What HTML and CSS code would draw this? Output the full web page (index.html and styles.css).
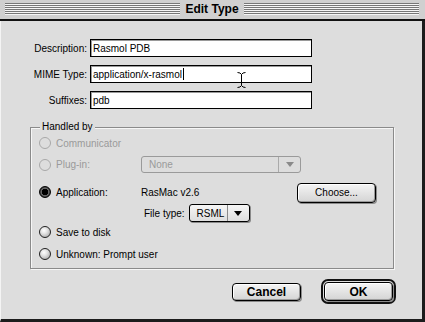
FILE: index.html
```html
<!DOCTYPE html>
<html lang="en">
	<head>
		<meta charset="UTF-8" />
		<title>Edit Type</title>
		<link rel="stylesheet" href="styles.css">
	</head>
	<body>
		<div class="window">
			<div class="titlebar">
				<span class="stripes"></span>
				<span class="title">Edit Type</span>
				<span class="stripes"></span>
			</div>

			<div class="content">
				<div class="fields">
					<div class="field">
						<span class="field-label">Description:</span>
						<div class="input">Rasmol PDB</div>
					</div>
					<div class="field">
						<span class="field-label">MIME Type:</span>
						<div class="input">application/x-rasmol<span class="caret"></span>
							<svg class="ibeam" width="9" height="16" viewBox="0 0 9 16">
								<path d="M0.5 0.5 Q3.5 0.5 4.5 2.5 Q5.5 0.5 8.5 0.5 M4.5 2.5 V13.5 M0.5 15.5 Q3.5 15.5 4.5 13.5 Q5.5 15.5 8.5 15.5" fill="none" stroke="#000" stroke-width="1" />
							</svg>
						</div>
					</div>
					<div class="field">
						<span class="field-label">Suffixes:</span>
						<div class="input">pdb</div>
					</div>
				</div>

				<div class="group">
					<span class="legend">Handled by</span>

					<div class="row row-comm">
						<span class="opt is-disabled"><span class="radio radio-off-disabled"></span>Communicator</span>
					</div>

					<div class="row row-plugin">
						<span class="opt is-disabled"><span class="radio radio-off-disabled"></span>Plug-in:</span>
						<div class="popup popup-disabled popup-plugin">
							<span class="popup-value">None</span>
							<span class="popup-arrow"><span class="tri"></span></span>
						</div>
					</div>

					<div class="row row-app">
						<span class="opt"><span class="radio radio-on"></span>Application:</span>
						<span class="app-name">RasMac v2.6</span>
						<span class="btn btn-choose">Choose...</span>
					</div>

					<div class="row row-filetype">
						<span class="opt"></span>
						<span class="filetype-label">File type:</span>
						<div class="popup popup-filetype">
							<span class="popup-value">RSML</span>
							<span class="popup-arrow"><span class="tri"></span></span>
						</div>
					</div>

					<div class="row row-save">
						<span class="opt opt-wide"><span class="radio radio-off"></span>Save to disk</span>
					</div>

					<div class="row row-unknown">
						<span class="opt opt-wide"><span class="radio radio-off"></span>Unknown: Prompt user</span>
					</div>
				</div>

				<div class="actions">
					<span class="btn btn-cancel">Cancel</span>
					<span class="ok-ring"><span class="btn btn-ok">OK</span></span>
				</div>
			</div>
		</div>
	</body>
</html>
```

FILE: styles.css
```css
body {
	margin: 0;
	font-family: "Liberation Sans", Arial, sans-serif;
	font-size: 10px;
	color: #000;
	background: #dddddd;
}

.window {
	width: 425px;
	height: 322px;
	display: flex;
	flex-direction: column;
	background: #dddddd;
}

/* title bar */
.titlebar {
	flex: none;
	height: 19px;
	display: flex;
	padding: 0 6px 0 5px;
	background: #d0d0d0;
	border-bottom: 2px solid #111;
}

.stripes {
	flex: 1;
	height: 12px;
	margin-top: 3px;
	background: repeating-linear-gradient(to bottom, #777 0 1px, #f6f6f6 1px 2px);
}

.title {
	width: 64px;
	text-align: center;
	font-weight: bold;
	font-size: 12px;
	line-height: 19px;
}

.content {
	flex: 1;
	border-left: 1px solid #f4f4f4;
	border-right: 3px solid #1c1c1c;
	border-bottom: 3px solid #1c1c1c;
	padding-top: 18px;
}

/* text fields */
.fields {
	display: flex;
	flex-direction: column;
	gap: 8px;
}

.field {
	display: flex;
	align-items: center;
	height: 18px;
}

.field-label {
	width: 86px;
	margin-right: 3px;
	text-align: right;
}

.input {
	position: relative;
	width: 222px;
	height: 18px;
	box-sizing: border-box;
	display: flex;
	align-items: center;
	padding-left: 2px;
	border: 1px solid #000;
	background: #fff;
	box-shadow: inset 1px 1px 0 #9a9a9a;
}

.caret {
	width: 1px;
	height: 12px;
	margin-left: 1px;
	background: #000;
}

.ibeam {
	position: absolute;
	left: 146px;
	top: 6px;
}

/* group box */
.group {
	position: relative;
	width: 364px;
	height: 142px;
	box-sizing: border-box;
	margin: 18px 0 0 29px;
	padding-left: 8px;
	border: 1px solid #8a8a8a;
	box-shadow: 1px 1px 0 #f6f6f6, inset 1px 1px 0 #f6f6f6;
}

.legend {
	position: absolute;
	top: -7px;
	left: 9px;
	padding: 0 2px;
	line-height: 12px;
	background: #dddddd;
}

.row {
	display: flex;
	align-items: center;
}

.row-comm { margin-top: 5px; height: 20px; }
.row-plugin { margin-top: 1px; height: 21px; }
.row-app { margin-top: 7px; height: 21px; }
.row-filetype { margin-top: 0; height: 20px; }
.row-save { margin-top: 0; height: 18px; }
.row-unknown { margin-top: 4px; height: 18px; }

.opt {
	flex: none;
	width: 102px;
	display: flex;
	align-items: center;
	gap: 5px;
}

.opt-wide {
	width: auto;
}

.is-disabled {
	color: #9a9a9a;
}

.radio {
	flex: none;
	width: 12px;
	height: 12px;
	box-sizing: border-box;
	border-radius: 50%;
}

.radio-off-disabled {
	border: 1px solid #a8a8a8;
	background: #dddddd;
}

.radio-off {
	border: 1px solid #222;
	background: radial-gradient(circle at 40% 35%, #fff 0, #e4e4e4 35%, #9a9a9a 100%);
}

.radio-on {
	border: 1px solid #000;
	background: radial-gradient(circle, #000 0 3px, #666 3.5px 4px, #333 5px);
}

.row-app .radio {
	margin-bottom: 2px;
}

.app-name {
	width: 156px;
}

.filetype-label {
	margin: 0 4px 0 3px;
}

/* popup menus */
.popup {
	display: flex;
	box-sizing: border-box;
	border: 1px solid #000;
	border-radius: 3px;
	background: linear-gradient(#f6f6f6, #dedede);
	box-shadow: 1px 1px 0 #8a8a8a;
}

.popup-value {
	flex: 1;
	display: flex;
	align-items: center;
	padding-left: 7px;
}

.popup-arrow {
	width: 21px;
	display: flex;
	align-items: center;
	justify-content: center;
	border-left: 1px solid #8a8a8a;
}

.tri {
	width: 0;
	height: 0;
	border-left: 4px solid transparent;
	border-right: 4px solid transparent;
	border-top: 5px solid #000;
}

.popup-plugin {
	width: 160px;
	height: 17px;
}

.popup-filetype {
	width: 61px;
	height: 18px;
}

.popup-disabled {
	border-color: #9a9a9a;
	color: #9a9a9a;
	background: #dddddd;
	box-shadow: none;
}

.popup-disabled .popup-arrow {
	border-left-color: #aaa;
}

.popup-disabled .tri {
	border-top-color: #8a8a8a;
}

/* buttons */
.btn {
	display: flex;
	align-items: center;
	justify-content: center;
	box-sizing: border-box;
	border: 1px solid #000;
	border-radius: 4px;
	background: linear-gradient(#f4f4f4, #d4d4d4);
	box-shadow: inset 1px 1px 0 #fff, inset -1px -1px 0 #9a9a9a, 1px 1px 0 #8a8a8a;
}

.btn-choose {
	width: 79px;
	height: 20px;
}

.actions {
	display: flex;
	align-items: center;
	justify-content: flex-end;
	gap: 20px;
	height: 25px;
	margin-top: 10px;
	padding-right: 26px;
}

.btn-cancel {
	width: 69px;
	height: 18px;
	font-size: 12px;
	font-weight: bold;
}

.ok-ring {
	display: flex;
	box-sizing: border-box;
	width: 75px;
	height: 25px;
	padding: 1px;
	border: 2px solid #111;
	border-radius: 7px;
}

.btn-ok {
	flex: 1;
	font-size: 12px;
	font-weight: bold;
}
```
